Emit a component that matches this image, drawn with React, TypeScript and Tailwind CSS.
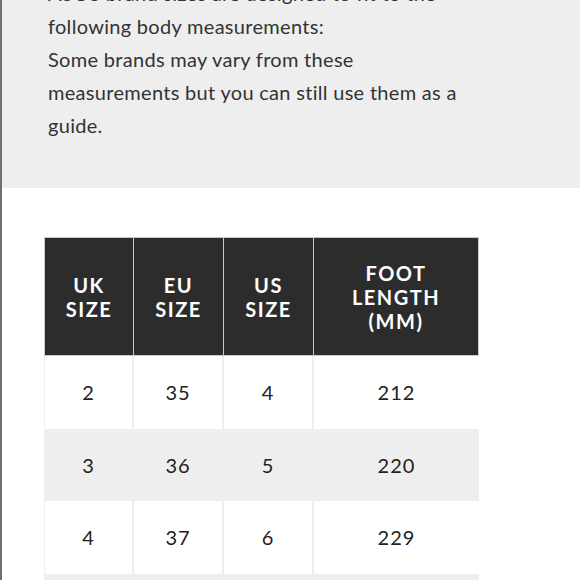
import React from "react";

const rows = [
  ["2", "35", "4", "212"],
  ["3", "36", "5", "220"],
  ["4", "37", "6", "229"],
  ["", "", "", ""],
];

export default function App() {
  return (
    <div
      className="w-[580px] h-[580px] overflow-hidden bg-white border-l-2 border-[#6f6f6f] flex flex-col"
      style={{ fontFamily: "Lato, 'Open Sans', sans-serif" }}
    >
      <div className="h-[188px] shrink-0 bg-[#eeeeee] overflow-hidden">
        <p className="mt-[-23px] ml-[46px] whitespace-nowrap text-[20px] leading-[33px] tracking-[0.3px] text-[#333333]">
          ASOS brand sizes are designed to fit to the
          <br />
          following body measurements:
          <br />
          Some brands may vary from these
          <br />
          measurements but you can still use them as a
          <br />
          guide.
        </p>
      </div>
      <div className="pt-[49px] pl-[42px]">
        <div className="w-[435px] grid grid-cols-[90px_90px_90px_165px] bg-white">
          {["UK SIZE", "EU SIZE", "US SIZE", "FOOT LENGTH (MM)"].map((h, i) => (
            <div
              key={i}
              className={`h-[119px] bg-[#2c2c2c] border border-[#c9c9c9] ${i > 0 ? "border-l-0" : ""} flex items-center justify-center text-center text-white font-bold text-[20px] leading-[24px] tracking-[1.5px] px-2`}
            >
              {h === "FOOT LENGTH (MM)" ? (
                <span>
                  FOOT
                  <br />
                  LENGTH
                  <br />
                  (MM)
                </span>
              ) : (
                <span>
                  {h.split(" ")[0]}
                  <br />
                  {h.split(" ")[1]}
                </span>
              )}
            </div>
          ))}
          {rows.map((r, ri) =>
            r.map((c, ci) => (
              <div
                key={`${ri}-${ci}`}
                className={`h-[72.5px] flex items-center justify-center text-[20px] tracking-[1px] text-[#222222] ${
                  ri % 2 === 1 ? "bg-[#eeeeee]" : "bg-white"
                } ${ci < 3 ? "border-r-2 border-[#eeeeee]" : ""} ${ci === 0 ? "border-l border-[#eeeeee]" : ""}`}
              >
                {c}
              </div>
            ))
          )}
        </div>
      </div>
    </div>
  );
}
